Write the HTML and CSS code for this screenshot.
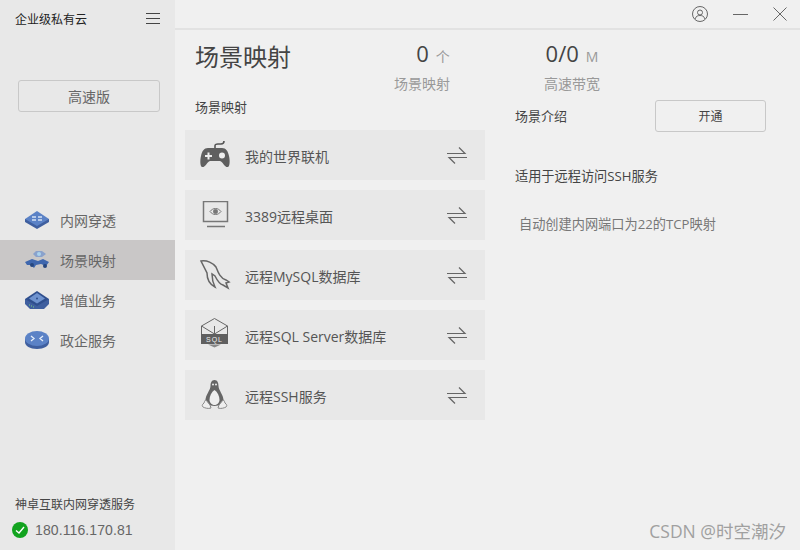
FILE: index.html
```html
<!DOCTYPE html>
<html lang="zh">
<head>
<meta charset="utf-8">
<title>场景映射</title>
<link rel="stylesheet" href="styles.css">
</head>
<body>
<div class="app">
  <aside class="side">
    <div class="brand">
      <span class="brand-name">企业级私有云</span>
      <svg class="menu" width="14" height="12" viewBox="0 0 14 12"><path d="M0 .5h14M0 5.500h14M0 10.500h14" stroke="#444" fill="none"/></svg>
    </div>
    <div class="speed">高速版</div>
    <nav class="nav">
      <div class="nav-item">
        <svg width="24" height="18" viewBox="0 0 24 18"><path d="M0 8v3l12 7 12-7V8z" fill="#3f5f9f"/><path d="M12 0 0 8l12 7 12-7z" fill="#5b82c6"/><path d="M7 6h4M13 6h4M7 9h4M13 9h4" stroke="#d5e2f5" stroke-width="1.300"/></svg>
        <span>内网穿透</span>
      </div>
      <div class="nav-item active">
        <svg width="24" height="20" viewBox="0 0 24 20"><path d="M11 1h6l4 3-4 3h-6L8 4z" fill="#8aa2cc"/><path d="M0 12l7-3 6 2 5-2 6 3-3 4-5-2-5 1-2 3-3-3H2z" fill="#3f67ae"/><circle cx="14" cy="4" r="2" fill="#a9d2ee"/><circle cx="7" cy="15" r="2" fill="#27477f"/><circle cx="20" cy="16" r="2" fill="#27477f"/></svg>
        <span>场景映射</span>
      </div>
      <div class="nav-item">
        <svg width="24" height="18" viewBox="0 0 24 18"><path d="M0 8v5l5 5h14l5-5V8z" fill="#3f5f9f"/><path d="M12 0 0 8l12 7 12-7z" fill="#2f4f8e"/><path d="M12 2 4 7.500l8 5 8-5z" fill="#6f93cf"/><circle cx="12" cy="7.500" r="1" fill="#2f4f8e"/><path d="M4 14h1M6 15h1M8 16h1" stroke="#7fd07f"/></svg>
        <span>增值业务</span>
      </div>
      <div class="nav-item">
        <svg width="24" height="18" viewBox="0 0 24 18"><path d="M0 8v3c0 4 5 7 12 7s12-3 12-7V8z" fill="#3f5f9f"/><ellipse cx="12" cy="7.500" rx="12" ry="7.500" fill="#5b82c6"/><path d="M6 5l3 2.500L6 10M18 5l-3 2.500 3 2.500" stroke="#e6eefa" stroke-width="1.300" fill="none"/></svg>
        <span>政企服务</span>
      </div>
    </nav>
    <div class="foot">
      <div class="foot-title">神卓互联内网穿透服务</div>
      <div class="foot-ip">
        <svg width="16" height="16" viewBox="0 0 16 16"><circle cx="8" cy="8" r="8" fill="#12a31f"/><path d="M4 8.500l3 2.500 5-6" stroke="#fff" stroke-width="1.400" fill="none"/></svg>
        <span>180.116.170.81</span>
      </div>
    </div>
  </aside>
  <main class="main">
    <header class="titlebar">
      <svg width="16" height="16" viewBox="0 0 16 16" fill="none" stroke="#666"><circle cx="8" cy="8" r="7.500"/><circle cx="8" cy="6.500" r="2.500"/><path d="M3 13c1-3 3-3.500 5-3.500s4 .5 5 3.500"/></svg>
      <svg width="15" height="16" viewBox="0 0 15 16" fill="none" stroke="#666"><path d="M0 8.500h15"/></svg>
      <svg width="14" height="14" viewBox="0 0 14 14" fill="none" stroke="#666"><path d="M.5.500l13 13M13.500.500l-13 13"/></svg>
    </header>
    <section class="summary">
      <h1 class="title">场景映射</h1>
      <div class="stat stat-a">
        <div class="stat-value">0<small>个</small></div>
        <div class="stat-label">场景映射</div>
      </div>
      <div class="stat stat-b">
        <div class="stat-value">0/0<small>M</small></div>
        <div class="stat-label">高速带宽</div>
      </div>
    </section>
    <section class="body">
      <div class="left">
        <div class="list-title">场景映射</div>
        <div class="rows">
          <div class="row">
            <svg class="ico" width="32" height="28" viewBox="0 0 32 28"><path d="M16 8V5c0-2 1-2 3-2h3c2 0 3-1 3-3" fill="none" stroke="#555" stroke-width="1.600"/><path d="M9 7h14c4 0 6 3 7 8 1 4 1 10-1 11-3 1-5-5-8-6H11c-3 1-5 7-8 6-2-1-2-7-1-11C3 10 5 7 9 7z" fill="#5f5f5f"/><path d="M6 15h7M9.500 11.500v7" stroke="#eee" stroke-width="2"/><circle cx="23" cy="14.500" r="3" fill="#eee"/></svg>
            <span class="row-name">我的世界联机</span>
            <svg class="swap" width="20" height="17" viewBox="0 0 20 17"><path d="M12 .500l6 6H0M8 16.500l-6-6h18" fill="none" stroke="#666" stroke-width="1.200"/></svg>
          </div>
          <div class="row">
            <svg class="ico" width="32" height="28" viewBox="0 0 32 28" fill="none" stroke="#777"><path d="M4.500.500h24v20h-24z" stroke-width="1.500"/><path d="M11 10.500c3-4 8-4 11 0-3 4-8 4-11 0z"/><circle cx="16.500" cy="10.500" r="2" fill="#777"/><path d="M8 25.500h18" stroke-width="1.500"/></svg>
            <span class="row-name">3389远程桌面</span>
            <svg class="swap" width="20" height="17" viewBox="0 0 20 17"><path d="M12 .500l6 6H0M8 16.500l-6-6h18" fill="none" stroke="#666" stroke-width="1.200"/></svg>
          </div>
          <div class="row">
            <svg class="ico" width="32" height="30" viewBox="0 0 32 30" fill="none" stroke="#666" stroke-width="1.500"><path d="M2 1C8 0 14 3 17 7c2 5 4 11 10 13l3 2-3 1 2 5-5-3c-4-1-6-5-8-9l-3-2c0 4 1 9 3 13C10 24 8 18 8 13 6 9 4 5 2 1z"/></svg>
            <span class="row-name">远程MySQL数据库</span>
            <svg class="swap" width="20" height="17" viewBox="0 0 20 17"><path d="M12 .500l6 6H0M8 16.500l-6-6h18" fill="none" stroke="#666" stroke-width="1.200"/></svg>
          </div>
          <div class="row">
            <svg class="ico" width="32" height="34" viewBox="0 0 32 34"><path d="M2.500 16V8L15.500 .5l13 7.500v8M2.500 8l13 8 13-8M15.500 8v8" fill="none" stroke="#666"/><path d="M2 16h27v10H2z" fill="#5f5f5f"/><path d="M9 26.500l6.500 3 6.500-3z" fill="#888"/><text x="15.500" y="24" class="sql">SQL</text></svg>
            <span class="row-name">远程SQL Server数据库</span>
            <svg class="swap" width="20" height="17" viewBox="0 0 20 17"><path d="M12 .500l6 6H0M8 16.500l-6-6h18" fill="none" stroke="#666" stroke-width="1.200"/></svg>
          </div>
          <div class="row">
            <svg class="ico" width="32" height="32" viewBox="0 0 32 32"><path d="M15.500 1c3 0 4 3 4 6 0 4 5 9 5 14 0 3-4 6-9 6s-9-3-9-6c0-5 5-10 5-14 0-3 1-6 4-6z" fill="#666"/><path d="M15.500 11c3 2 5 6 5 10 0 3-3 5-5 5s-5-2-5-5c0-4 2-8 5-10z" fill="#eee"/><path d="M7 21l4 5 1 3c-3 1-6 0-8-1-1-1-1-2 0-3 2-1 1-4 3-4zM24 21l-4 5-1 3c3 1 6 0 8-1 1-1 1-2 0-3-2-1-1-4-3-4z" fill="#eee" stroke="#888"/><circle cx="14" cy="5.500" r="1" fill="#eee"/><circle cx="17" cy="5.500" r="1" fill="#eee"/></svg>
            <span class="row-name">远程SSH服务</span>
            <svg class="swap" width="20" height="17" viewBox="0 0 20 17"><path d="M12 .500l6 6H0M8 16.500l-6-6h18" fill="none" stroke="#666" stroke-width="1.200"/></svg>
          </div>
        </div>
      </div>
      <div class="right">
        <div class="intro-head">
          <span class="intro-title">场景介绍</span>
          <span class="open">开通</span>
        </div>
        <div class="intro-name">适用于远程访问SSH服务</div>
        <div class="intro-desc">自动创建内网端口为22的TCP映射</div>
      </div>
    </section>
  </main>
  <div class="mark">CSDN @时空潮汐</div>
</div>
</body>
</html>
```
FILE: styles.css
```css
* { box-sizing: border-box; }
html, body { margin: 0; height: 100%; }
body {
  font-family: "Open Sans", "Noto Sans CJK SC", sans-serif;
  font-size: 13px;
  color: #444;
  overflow: hidden;
}
.app { position: relative; display: flex; width: 800px; height: 550px; background: #f0f0f0; }
.side {
  width: 175px;
  flex: none;
  background: #e8e8e8;
  display: flex;
  flex-direction: column;
}
.brand {
  display: flex;
  align-items: center;
  justify-content: space-between;
  height: 38px;
  padding: 0 15px;
}
.brand-name { font-size: 12px; color: #222; }
.speed {
  margin: 42px 15px 0 18px;
  height: 32px;
  border: 1px solid #c8c8c8;
  border-radius: 3px;
  font-size: 14px;
  line-height: 32px;
  text-align: center;
  color: #666;
}
.nav { margin-top: 88px; display: flex; flex-direction: column; }
.nav-item {
  height: 40px;
  display: flex;
  align-items: center;
  gap: 11px;
  padding-left: 25px;
  color: #666;
  font-size: 14px;
}
.nav-item.active { background: #c9c7c7; }
.foot { margin-top: auto; padding: 0 0 12px 15px; }
.foot-title { font-size: 12px; color: #444; line-height: 18px; }
.foot-ip {
  display: flex;
  align-items: center;
  gap: 7px;
  margin-top: 8px;
  margin-left: -3px;
  font-family: "Liberation Sans", sans-serif;
  font-size: 14px;
  letter-spacing: .1px;
  color: #666;
}
.main { flex: 1; display: flex; flex-direction: column; min-width: 0; }
.titlebar {
  height: 30px;
  flex: none;
  border-bottom: 2px solid #e2e2e2;
  display: flex;
  align-items: center;
  justify-content: flex-end;
  gap: 25px;
  padding: 0 13px 0 0;
}
.summary { height: 70px; display: flex; align-items: flex-start; padding-left: 20px; }
.title { margin: 9px 0 0; width: 158px; font-size: 24px; font-weight: 400; line-height: 36px; color: #444; }
.stat { text-align: center; }
.stat-a { width: 100px; margin-left: 19px; }
.stat-a .stat-value { padding-left: 22px; }
.stat-a small { margin-left: 7px; }
.stat-b { width: 100px; margin-left: 50px; }
.stat-b small { margin-left: 7px; font-size: 15px; }
.stat-value { font-size: 22px; line-height: 28px; margin-top: 9px; color: #444; }
.stat-value small { font-size: 14px; color: #999; }
.stat-label { font-size: 14px; line-height: 20px; margin-top: 3px; color: #999; }
.body { display: flex; flex: 1; }
.left { width: 300px; margin-left: 10px; }
.list-title { height: 30px; padding: 0 10px; line-height: 14px; font-size: 13px; color: #444; }
.rows { display: flex; flex-direction: column; gap: 10px; }
.row { position: relative; height: 50px; background: #e8e8e8; display: flex; align-items: center; padding-left: 60px; }
.row-name { font-size: 14px; color: #555; padding-top: 2px; }
.ico { position: absolute; left: 14px; top: 50%; transform: translateY(-50%); }
.swap { position: absolute; right: 18px; top: 17px; }
.sql { font-family: "Liberation Sans", sans-serif; font-size: 7px; fill: #eee; text-anchor: middle; letter-spacing: 1px; }
.right { width: 251px; margin-left: 30px; }
.intro-head { display: flex; align-items: center; justify-content: space-between; }
.intro-title { font-size: 13px; color: #444; padding-bottom: 2px; }
.open {
  width: 111px;
  height: 32px;
  border: 1px solid #c8c8c8;
  border-radius: 3px;
  text-align: center;
  font-size: 12px;
  line-height: 32px;
  color: #444;
}
.intro-name { margin-top: 32px; font-size: 13.200px; line-height: 24px; color: #444; }
.intro-desc { margin-top: 24px; margin-left: 4px; font-size: 13.200px; line-height: 24px; color: #777; }
.mark {
  position: absolute;
  right: 14px;
  bottom: 8px;
  font-size: 17.500px;
  line-height: 22px;
  color: #a0a0a0;
}
```
